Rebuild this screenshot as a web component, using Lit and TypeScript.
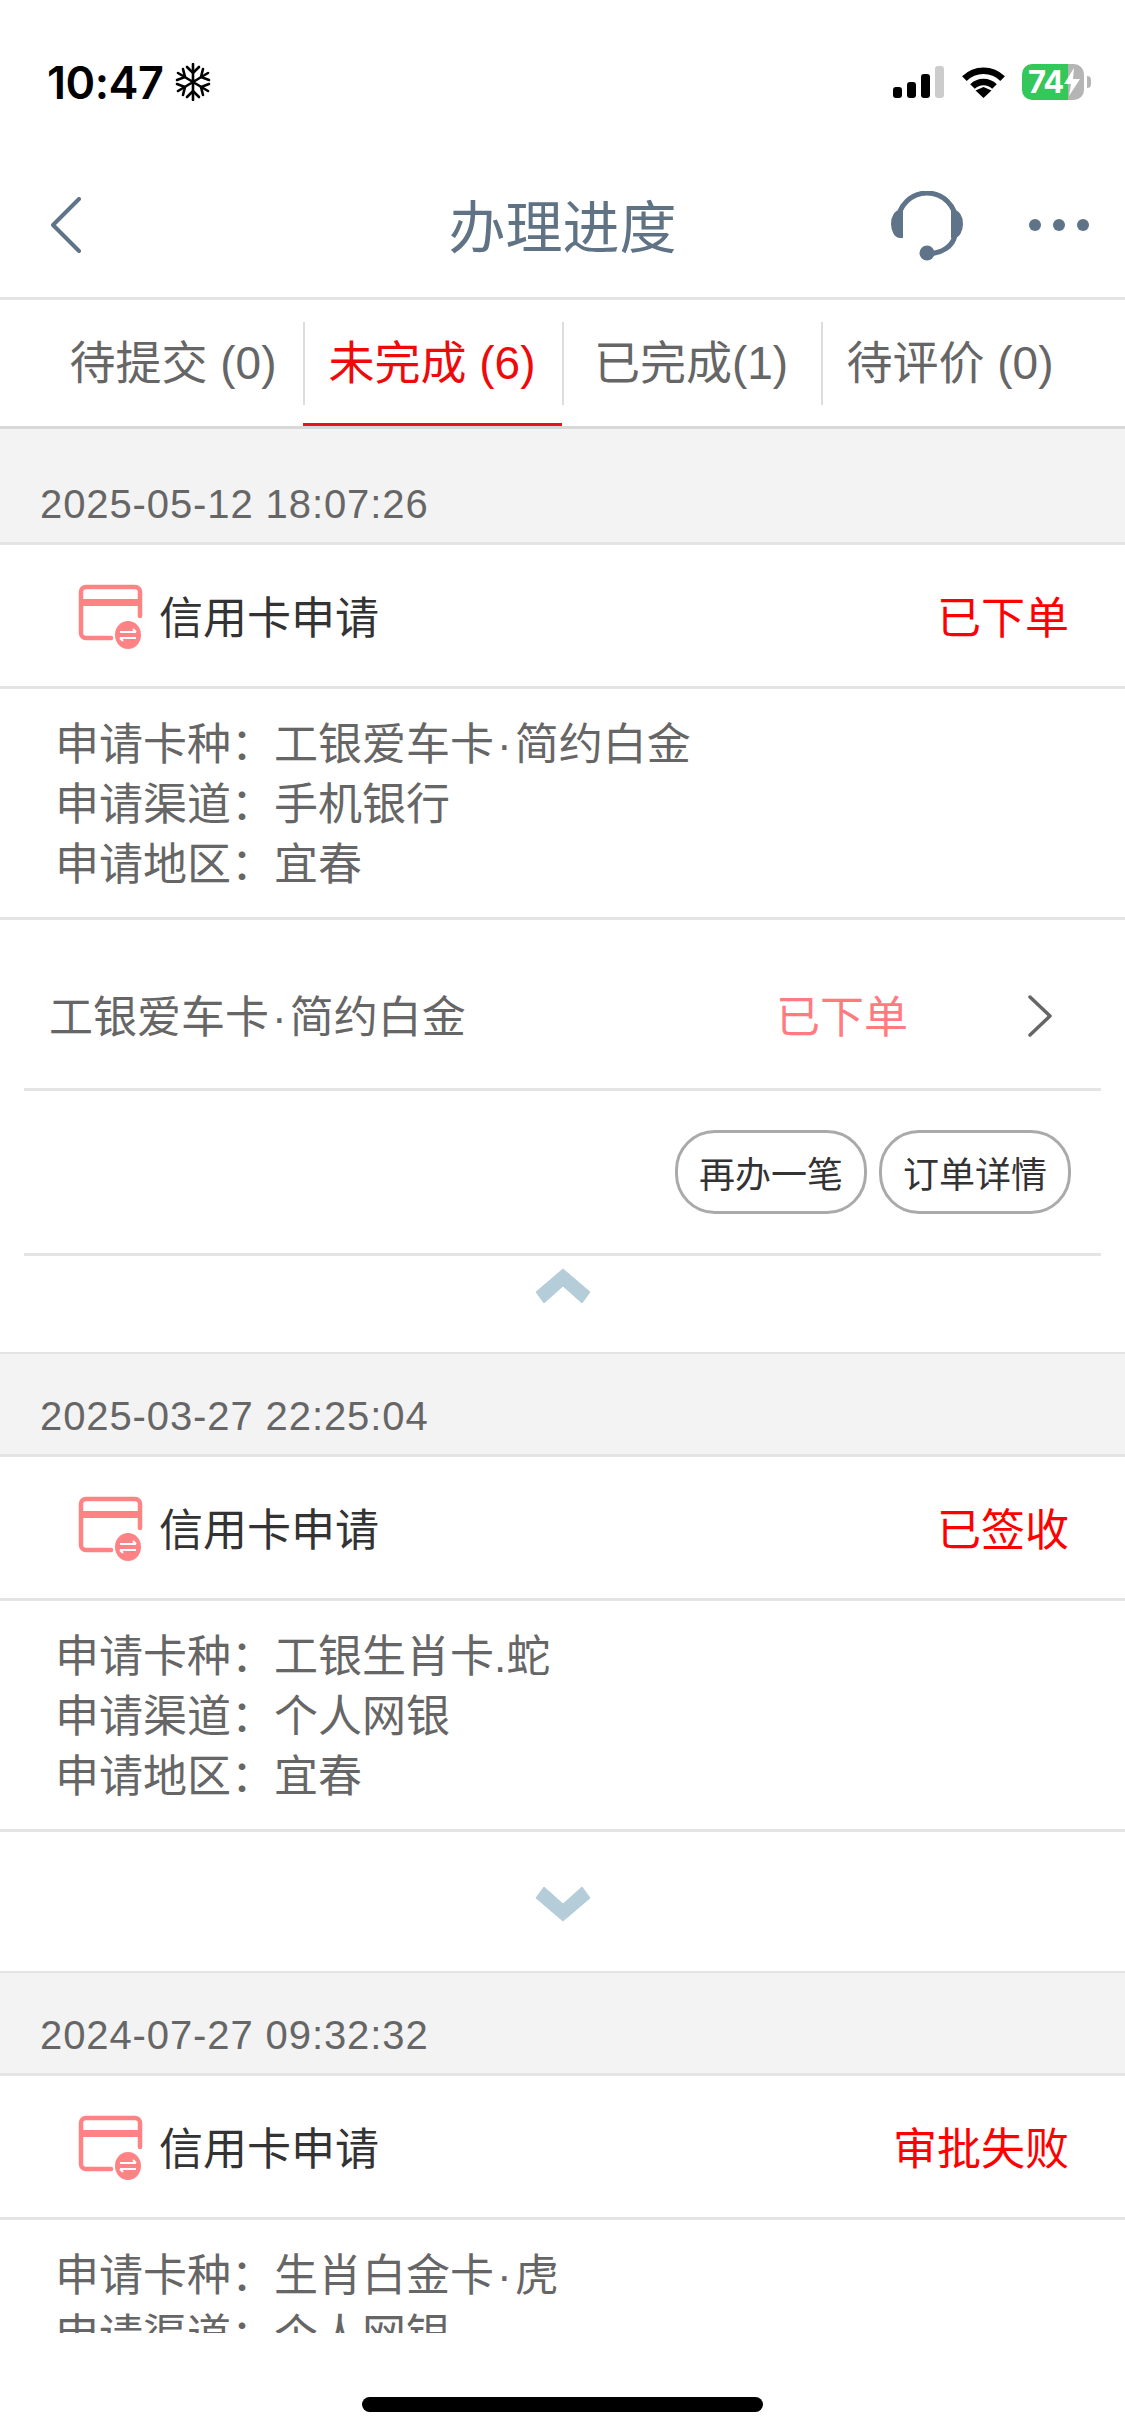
import { LitElement, html, css, svg } from "lit";
import { customElement } from "lit/decorators.js";

interface Order {
  date: string;
  status: string;
  info: [string, string][];
  item?: string;
  itemStatus?: string;
}

const ORDERS: Order[] = [
  {
    date: "2025-05-12 18:07:26",
    status: "已下单",
    info: [["申请卡种：", "工银爱车卡·简约白金"], ["申请渠道：", "手机银行"], ["申请地区：", "宜春"]],
    item: "工银爱车卡·简约白金",
    itemStatus: "已下单",
  },
  {
    date: "2025-03-27 22:25:04",
    status: "已签收",
    info: [["申请卡种：", "工银生肖卡.蛇"], ["申请渠道：", "个人网银"], ["申请地区：", "宜春"]],
  },
  {
    date: "2024-07-27 09:32:32",
    status: "审批失败",
    info: [["申请卡种：", "生肖白金卡·虎"], ["申请渠道：", "个人网银"], ["申请地区：", "宜春"]],
  },
];

const TABS = [
  { label: "待提交 (0)" },
  { label: "未完成 (6)", active: true },
  { label: "已完成(1)" },
  { label: "待评价 (0)" },
];

const cardIcon = svg`<svg class="card-icon" width="66" height="66" viewBox="0 0 66 66">
  <path d="M62 32 V8 a5 5 0 0 0 -5 -5 H8 a5 5 0 0 0 -5 5 V49 a5 5 0 0 0 5 5 H33" fill="none" stroke="#ff8285" stroke-width="4.5" stroke-linecap="round"/>
  <rect x="3" y="15" width="59" height="7" fill="#ff8285"/>
  <ellipse cx="50" cy="51" rx="13" ry="14" fill="#ff8285"/>
  <path d="M42 48 H58 M55 45 L58 48 M42 54 H58 M45 57 L42 54" fill="none" stroke="#fff" stroke-width="2"/>
</svg>`;

@customElement("app-root")
export class AppRoot extends LitElement {
  static styles = css`
    :host {
      display: block;
      width: 1125px;
      height: 2436px;
      background: #fff;
      font-family: "Liberation Sans", "Noto Sans CJK SC", sans-serif;
      overflow: hidden;
    }
    .page { display: flex; flex-direction: column; height: 2436px; }

    .status { height: 164px; box-sizing: border-box; padding: 0 34px 0 47px; display: flex; align-items: center; flex: none; }
    .time { font: 600 45px/1 Inter, "Liberation Sans", sans-serif; color: #000; letter-spacing: -0.5px; }
    .flake { margin-left: 12px; }
    .status-right { margin-left: auto; display: flex; align-items: center; }
    .signal { display: flex; align-items: flex-end; gap: 5px; height: 32px; }
    .signal i { display: block; width: 9px; border-radius: 3px; background: #000; }
    .signal i.off { background: #ccc; }
    .wifi { margin-left: 17px; }
    .battery {
      position: relative; margin-left: 16px; width: 62px; height: 36px; border-radius: 10px; box-sizing: border-box;
      background: linear-gradient(90deg, #34c759 0 46px, #b5b5b5 46px);
      color: #fff; font: 700 31px/36px Inter, "Liberation Sans", sans-serif; padding-left: 6px; letter-spacing: -1px;
    }
    .bolt { position: absolute; left: 42px; top: 4px; }
    .cap { width: 4px; height: 12px; margin-left: 3px; background: #b5b5b5; border-radius: 0 6px 6px 0; }

    .nav {
      height: 136px; flex: none; box-sizing: border-box; border-bottom: 3px solid #e4e4e4;
      display: grid; grid-template-columns: 1fr auto 1fr; align-items: center; padding: 0 36px 12px 36px;
    }
    .back { margin-left: 15px; }
    .title { font-size: 57px; line-height: 70px; color: #5f7385; margin-top: 6px; }
    .nav-right { display: flex; align-items: center; justify-content: flex-end; gap: 66px; }
    .headset { margin-top: 3px; }

    .tabs { flex: none; height: 129px; box-sizing: border-box; border-bottom: 3px solid #d8d8d8; padding: 0 45px 0 44px; display: grid; grid-template-columns: repeat(4, 1fr); }
    .tab { padding-top: 22px; display: flex; flex-direction: column; }
    .tab-label {
      height: 83px; box-sizing: border-box; padding: 0 3px 10px 0; display: flex; align-items: center; justify-content: center;
      font-size: 46px; color: #666; border-left: 2px solid #ddd; white-space: nowrap;
    }
    .tab:first-child .tab-label { border-left-color: transparent; }
    .tab.active .tab-label { color: #ee0a0a; }
    .bar { height: 3px; margin-top: 18px; }
    .tab.active .bar { background: #e81414; }

    .list { height: 1904px; flex: none; overflow: hidden; background: #f3f3f3; padding-top: 13px; box-sizing: border-box; }
    .date {
      height: 100px; box-sizing: border-box; padding: 0 0 15px 40px; display: flex; align-items: flex-end;
      font-size: 40px; line-height: 46px; letter-spacing: 0.9px; color: #666;
    }
    .card { background: #fff; }
    .head {
      height: 147px; box-sizing: border-box; border-top: 3px solid #e4e4e4; border-bottom: 3px solid #e4e4e4;
      display: flex; align-items: center; padding: 0 56px 2px 78px;
    }
    .card-icon { flex: none; margin: 5px 15px 0 0; }
    .head-title { font-size: 44px; color: #333; flex: 1; }
    .head-status { font-size: 44px; color: #f00; }
    .info { height: 228px; box-sizing: border-box; padding: 26px 55px 22px; font-size: 44px; line-height: 60px; color: #666; }
    .row { display: flex; white-space: nowrap; }
    .row span:first-child { width: 219px; flex: none; }
    .dot { padding: 0 3px; }
    .item {
      height: 171px; box-sizing: border-box; border-top: 3px solid #e4e4e4;
      display: flex; align-items: center; padding: 20px 72px 0 49px;
      font-size: 44px; color: #666;
    }
    .item-name { flex: 1; }
    .item-status { color: #ff7b80; margin-right: 120px; }
    .item-arrow { margin-top: 3px; }
    .rule { height: 3px; background: #e4e4e4; margin: 0 24px; }
    .actions { height: 162px; display: flex; justify-content: flex-end; align-items: center; gap: 12px; padding-right: 54px; }
    .btn {
      width: 192px; height: 84px; box-sizing: border-box; border: 3px solid #aaa; border-radius: 40px;
      display: flex; align-items: center; justify-content: center; font-size: 36px; color: #333; background: #fff;
    }
    .expander { display: flex; justify-content: center; border-bottom: 2px solid #e4e4e4; }
    .expander.open { height: 98px; padding-top: 12px; box-sizing: border-box; }
    .expander.closed { height: 144px; align-items: center; box-sizing: border-box; padding-top: 4px; border-top: 3px solid #e4e4e4; }

    .home { flex: 1; display: flex; justify-content: center; padding-top: 64px; box-sizing: border-box; }
    .home i { display: block; width: 401px; height: 15px; border-radius: 8px; background: #000; }
  `;

  private chevron(up: boolean) {
    return html`<svg width="56" height="36" viewBox="0 0 56 36">
      <polygon
        fill="#b5cdd8"
        stroke="#b5cdd8"
        stroke-width="1"
        stroke-linejoin="round"
        points=${up ? "28,1 55,24 47,35 28,18 9,35 1,24" : "28,35 55,12 47,1 28,18 9,1 1,12"}
      ></polygon>
    </svg>`;
  }

  private dotted(text: string) {
    const parts = text.split("·");
    return parts.length === 2 ? html`${parts[0]}<span class="dot">·</span>${parts[1]}` : text;
  }

  private renderOrder(o: Order) {
    return html`
      <div class="date">${o.date}</div>
      <div class="card">
        <div class="head">
          ${cardIcon}
          <span class="head-title">信用卡申请</span>
          <span class="head-status">${o.status}</span>
        </div>
        <div class="info">
          ${o.info.map((r) => html`<div class="row"><span>${r[0]}</span><span>${this.dotted(r[1])}</span></div>`)}
        </div>
        ${o.item
          ? html`
              <div class="item">
                <span class="item-name">${this.dotted(o.item)}</span>
                <span class="item-status">${o.itemStatus}</span>
                <svg class="item-arrow" width="25" height="42" viewBox="0 0 25 42">
                  <path d="M2 2 L22 21 L2 40" fill="none" stroke="#666" stroke-width="3.5" stroke-linecap="round" stroke-linejoin="round" />
                </svg>
              </div>
              <div class="rule"></div>
              <div class="actions">
                <div class="btn">再办一笔</div>
                <div class="btn">订单详情</div>
              </div>
              <div class="rule"></div>
              <div class="expander open">${this.chevron(true)}</div>
            `
          : html`<div class="expander closed">${this.chevron(false)}</div>`}
      </div>
    `;
  }

  render() {
    return html`
      <div class="page">
        <div class="status">
          <span class="time">10:47</span>
          <svg class="flake" width="36" height="38" viewBox="0 0 36 38" fill="none" stroke="#000" stroke-width="2.6" stroke-linecap="round">
            <path d="M18 1 V37 M3 10 L33 28 M33 10 L3 28" />
            <path d="M12 4 L18 10 L24 4 M12 34 L18 28 L24 34 M2 17 L10 14 L8 6 M34 21 L26 24 L28 32 M34 17 L26 14 L28 6 M2 21 L10 24 L8 32" />
          </svg>
          <div class="status-right">
            <div class="signal">
              <i style="height:11px"></i><i style="height:16px"></i><i style="height:24px"></i><i class="off" style="height:32px"></i>
            </div>
            <svg class="wifi" width="45" height="34" viewBox="0 0 45 34" fill="none" stroke="#000" stroke-width="6.5">
              <path d="M3.4 13.6 A27 27 0 0 1 41.6 13.6" />
              <path d="M11.5 21.5 A15.5 15.5 0 0 1 33.5 21.5" />
              <polygon points="22.5,33 14.5,25.5 22.5,22 30.5,25.5" fill="#000" stroke="none" />
            </svg>
            <div class="battery">
              74
              <svg class="bolt" width="16" height="28" viewBox="0 0 16 28"><polygon points="10,0 0,16 7,16 5,28 16,11 9,11" fill="#fff" /></svg>
            </div>
            <div class="cap"></div>
          </div>
        </div>

        <div class="nav">
          <svg class="back" width="30" height="56" viewBox="0 0 30 56">
            <path d="M28 2 L2 28 L28 54" fill="none" stroke="#5f7488" stroke-width="4" stroke-linecap="round" stroke-linejoin="round" />
          </svg>
          <div class="title">办理进度</div>
          <div class="nav-right">
            <svg class="headset" width="72" height="70" viewBox="0 0 72 70" fill="none">
              <path d="M7 34 V31 A29 29 0 0 1 65 31 V34" stroke="#5f7488" stroke-width="5" />
              <path d="M12 19 H9 A9 14 0 0 0 9 47 H12 Z M60 19 H63 A9 14 0 0 1 63 47 H60 Z" fill="#5f7488" />
              <path d="M64 44 C62 56 50 62 38 63" stroke="#5f7488" stroke-width="5" />
              <circle cx="36" cy="62" r="7.5" fill="#5f7488" />
            </svg>
            <svg width="60" height="12" viewBox="0 0 60 12" fill="#5f7488">
              <circle cx="6" cy="6" r="6" /><circle cx="30" cy="6" r="6" /><circle cx="54" cy="6" r="6" />
            </svg>
          </div>
        </div>

        <div class="tabs">
          ${TABS.map(
            (t) => html`<div class="tab ${t.active ? "active" : ""}">
              <div class="tab-label">${t.label}</div>
              <div class="bar"></div>
            </div>`
          )}
        </div>

        <div class="list">${ORDERS.map((o) => this.renderOrder(o))}</div>
        <div class="home"><i></i></div>
      </div>
    `;
  }
}
